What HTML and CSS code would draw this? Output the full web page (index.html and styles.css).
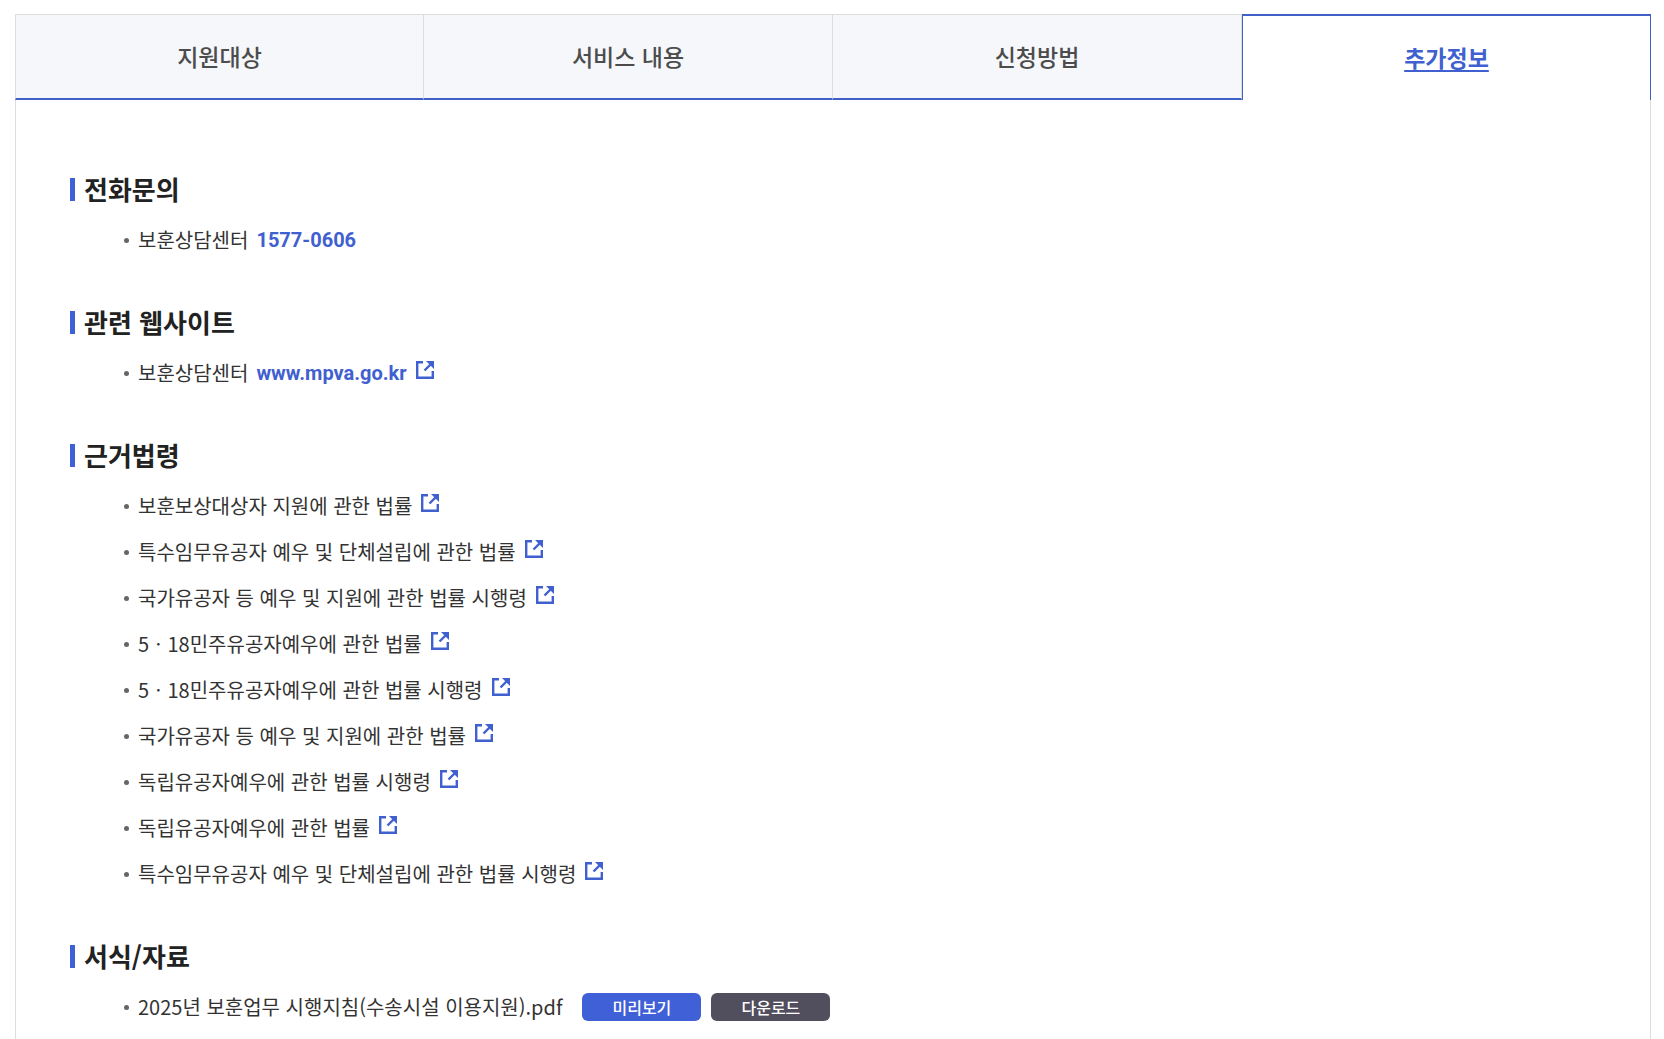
FILE: index.html
```html
<!DOCTYPE html>
<html lang="ko">
<head>
<meta charset="utf-8">
<meta name="viewport" content="width=device-width, initial-scale=1">
<title>추가정보</title>
<link rel="stylesheet" href="styles.css">
</head>
<body>
<svg class="sprite" aria-hidden="true">
  <symbol id="ext" viewBox="0 0 18 18">
    <path d="M7 1.200H1.200v15.600h15.600V10" fill="none" stroke="currentColor" stroke-width="2.400"/>
    <path d="M10 0h8v8z" fill="currentColor"/>
    <path d="M8.500 9.500l6-6" fill="none" stroke="currentColor" stroke-width="2.400"/>
  </symbol>
</svg>
<main class="page">
  <nav class="tabs">
    <a class="tab" href="#target">지원대상</a>
    <a class="tab" href="#service">서비스 내용</a>
    <a class="tab" href="#apply">신청방법</a>
    <a class="tab tab-active" href="#info" aria-current="page">추가정보</a>
  </nav>
  <div class="panel" id="info">
    <section class="section">
      <h2 class="heading">전화문의</h2>
      <ul class="list">
        <li class="item"><span>보훈상담센터</span><a class="contact" href="tel:1577-0606">1577-0606</a></li>
      </ul>
    </section>
    <section class="section">
      <h2 class="heading">관련 웹사이트</h2>
      <ul class="list">
        <li class="item"><span>보훈상담센터</span><a class="contact link" href="#site">www.mpva.go.kr<svg class="icon"><use href="#ext"/></svg></a></li>
      </ul>
    </section>
    <section class="section">
      <h2 class="heading">근거법령</h2>
      <ul class="list">
        <li class="item"><a class="link" href="#law1">보훈보상대상자 지원에 관한 법률<svg class="icon"><use href="#ext"/></svg></a></li>
        <li class="item"><a class="link" href="#law2">특수임무유공자 예우 및 단체설립에 관한 법률<svg class="icon"><use href="#ext"/></svg></a></li>
        <li class="item"><a class="link" href="#law3">국가유공자 등 예우 및 지원에 관한 법률 시행령<svg class="icon"><use href="#ext"/></svg></a></li>
        <li class="item"><a class="link" href="#law4">5ㆍ18민주유공자예우에 관한 법률<svg class="icon"><use href="#ext"/></svg></a></li>
        <li class="item"><a class="link" href="#law5">5ㆍ18민주유공자예우에 관한 법률 시행령<svg class="icon"><use href="#ext"/></svg></a></li>
        <li class="item"><a class="link" href="#law6">국가유공자 등 예우 및 지원에 관한 법률<svg class="icon"><use href="#ext"/></svg></a></li>
        <li class="item"><a class="link" href="#law7">독립유공자예우에 관한 법률 시행령<svg class="icon"><use href="#ext"/></svg></a></li>
        <li class="item"><a class="link" href="#law8">독립유공자예우에 관한 법률<svg class="icon"><use href="#ext"/></svg></a></li>
        <li class="item"><a class="link" href="#law9">특수임무유공자 예우 및 단체설립에 관한 법률 시행령<svg class="icon"><use href="#ext"/></svg></a></li>
      </ul>
    </section>
    <section class="section">
      <h2 class="heading">서식/자료</h2>
      <ul class="list">
        <li class="item"><span>2025년 보훈업무 시행지침(수송시설 이용지원).pdf</span>
          <div class="actions">
            <button class="btn" type="button">미리보기</button>
            <button class="btn btn-dark" type="button">다운로드</button>
          </div>
        </li>
      </ul>
    </section>
  </div>
</main>
</body>
</html>
```

FILE: styles.css
```css
* { box-sizing: border-box; }

body {
  margin: 0;
  background: #fff;
  color: #333;
  font-family: "Noto Sans CJK KR", sans-serif;
  font-size: 20px;
  line-height: 30px;
}

a { color: inherit; text-decoration: none; }

.sprite { display: none; }

.page {
  display: flex;
  flex-direction: column;
  min-height: 100vh;
  padding: 14px 13px 0 15px;
}

.tabs {
  display: grid;
  grid-template-columns: repeat(4, 1fr);
}

.tab {
  display: flex;
  align-items: center;
  justify-content: center;
  height: 86px;
  padding-bottom: 2px;
  border-top: 1px solid #ddd;
  border-right: 1px solid #ddd;
  border-bottom: 2px solid #4060c8;
  background: #f5f7fb;
  color: #4c4c4c;
  font-size: 23px;
  font-weight: 500;
}

.tab:first-child { border-left: 1px solid #ddd; }

.tab-active {
  border: 1px solid #4060c8;
  border-top-width: 2px;
  border-bottom: 0;
  background: #fff;
  color: #4060d0;
  font-weight: 700;
  text-decoration: underline;
  text-decoration-thickness: 2px;
  text-underline-offset: 3px;
  text-decoration-skip-ink: none;
}

.panel {
  display: flex;
  flex-direction: column;
  flex: 1;
  gap: 40px;
  padding: 70px 54px 8px;
  border: 1px solid #ddd;
  border-width: 0 1px;
}

.heading {
  display: flex;
  align-items: center;
  gap: 9px;
  margin: 0 0 9px;
  color: #222;
  font-size: 26px;
  font-weight: 700;
  line-height: 38px;
}

.heading::before {
  width: 5px;
  height: 23px;
  background: #4060d8;
  content: "";
}

.list {
  margin: 0;
  padding: 0 0 0 54px;
  list-style: none;
}

.item {
  display: flex;
  align-items: center;
  height: 46px;
}

.item::before {
  width: 5px;
  height: 5px;
  margin-right: 9px;
  border-radius: 50%;
  background: #666;
  content: "";
}

.link {
  display: flex;
  gap: 9px;
}

.icon {
  width: 18px;
  height: 18px;
  margin-top: 3px;
  color: #4060d0;
}

.contact {
  margin-left: 8px;
  color: #4060d0;
  font-family: Roboto, "Noto Sans CJK KR", sans-serif;
  font-weight: 700;
}

.actions {
  display: flex;
  gap: 10px;
  margin-left: 20px;
}

.btn {
  width: 119px;
  height: 28px;
  padding: 0;
  border: 0;
  border-radius: 6px;
  background: #4060d8;
  color: #fff;
  font-family: inherit;
  font-size: 16px;
  font-weight: 500;
  line-height: 28px;
}

.btn-dark { background: #514e5e; }
```
